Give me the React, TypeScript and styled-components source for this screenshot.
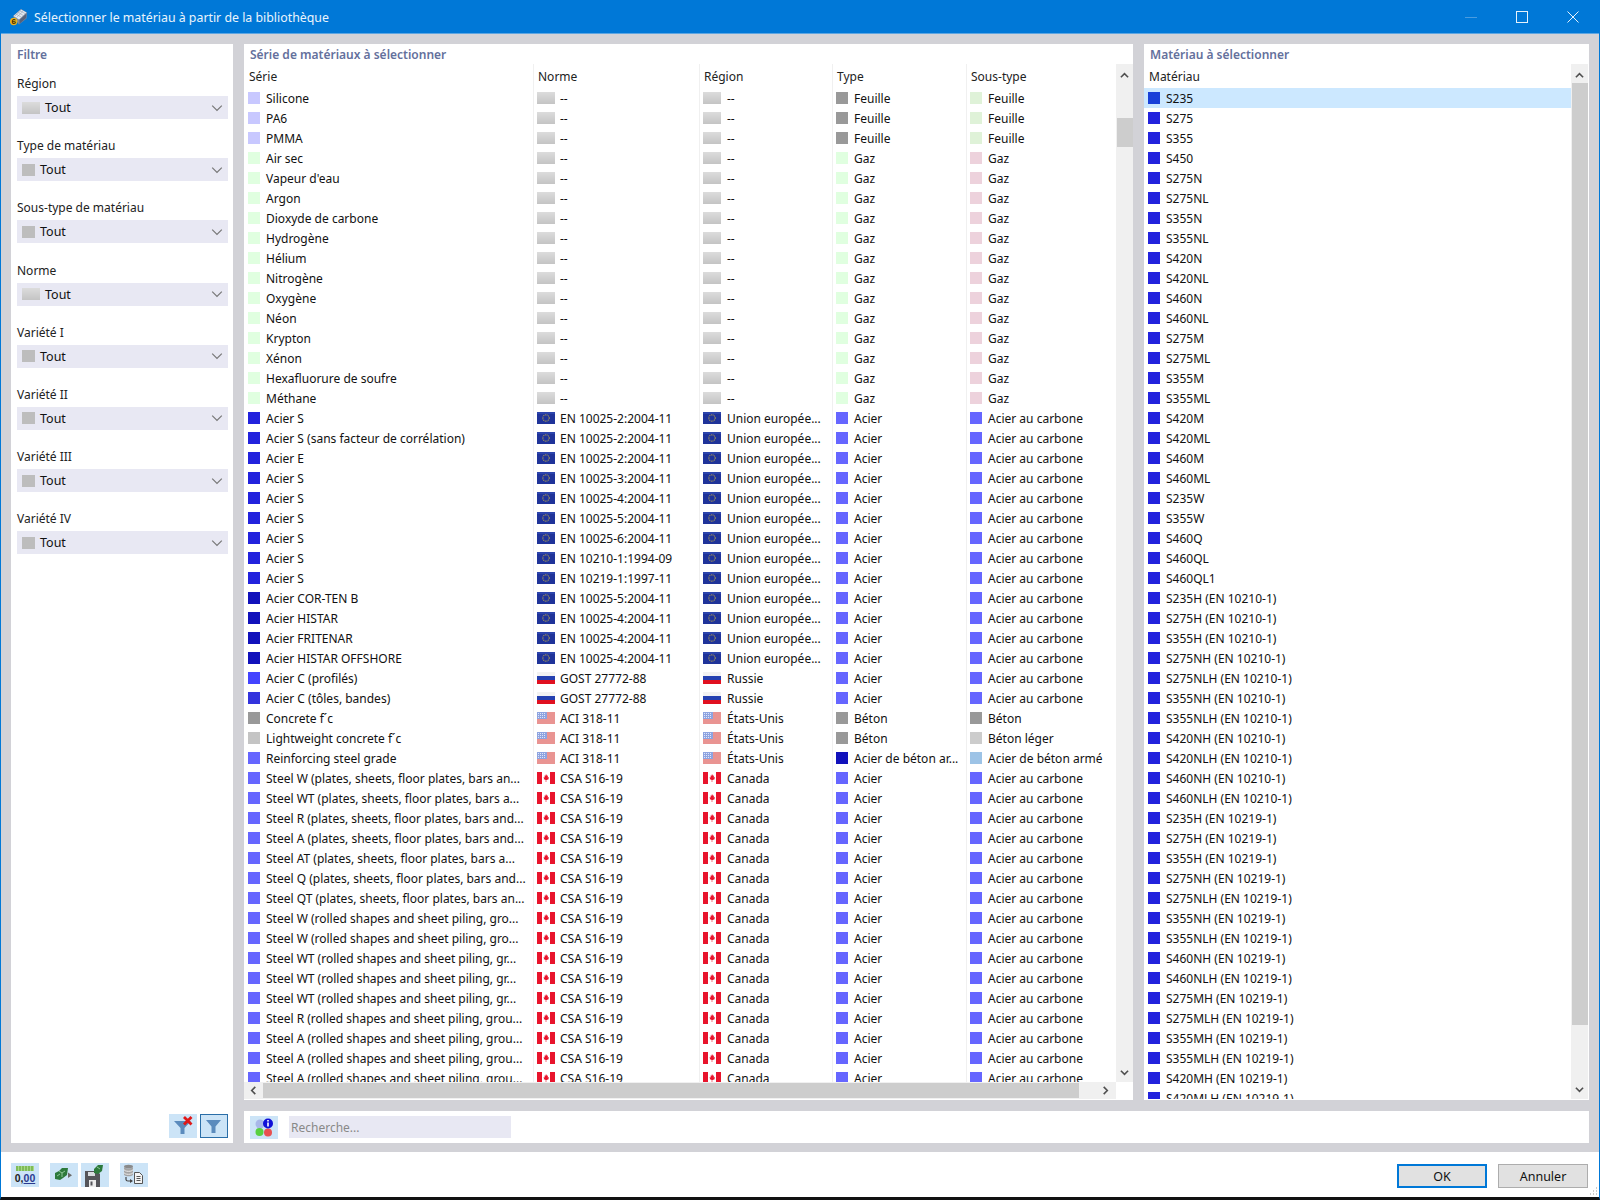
import React from 'react';
import styled, { createGlobalStyle } from 'styled-components';

const GlobalStyle = createGlobalStyle`
   html, body {
      margin: 0;
      padding: 0;
      background: #000;
   }
   body {
      font-family: "Noto Sans", "Liberation Sans", sans-serif;
      font-size: 12px;
      color: #111;
   }
`;

const Window = styled.div`
   position: relative;
   display: flex;
   flex-direction: column;
   width: 1600px;
   height: 1200px;
   box-sizing: border-box;
   border-left: 1px solid #0078d7;
   border-right: 1px solid #0078d7;
   border-bottom: 3px solid #111;
   background: #d2d2d7;
   overflow: hidden;
`;

const TitleBar = styled.div`
   display: flex;
   flex: 0 0 34px;
   align-items: center;
   box-sizing: border-box;
   margin: 0 -1px;
   padding: 0 21px 0 10px;
   background: #0078d7;
   border-bottom: 1px solid #5ea6e2;
`;

const TitleText = styled.span`
   flex: 1;
   margin-left: 6px;
   padding-top: 2px;
   font-size: 12.35px;
   color: #eaf4fc;
`;

const WindowControls = styled.div`
   display: flex;
   align-items: center;
   gap: 39px;
`;

const Body = styled.div`
   display: grid;
   flex: 1;
   min-height: 0;
   grid-template-columns: 222px 889px 445px;
   grid-template-rows: 1056px 32px;
   gap: 11px;
   padding: 10px 10px 9px;
`;

const Panel = styled.section`
   display: flex;
   flex-direction: column;
   min-width: 0;
   min-height: 0;
   background: #fff;
`;

const FilterPanel = styled(Panel)`
   grid-row: 1 / span 2;
   padding: 0 5px 5px 6px;
`;

const SectionTitle = styled.div<{ $inset?: number }>`
   flex: 0 0 auto;
   height: 20px;
   padding-left: ${props => props.$inset ?? 6}px;
   line-height: 22px;
   font-weight: 600;
   color: #64709c;
`;

const FilterFields = styled.div`
   flex: 1;
   padding-top: 10px;
`;

const FilterField = styled.div`
   margin-bottom: 17.2px;
`;

const FieldLabel = styled.div`
   height: 20px;
   margin-bottom: 2px;
   line-height: 20px;
   color: #222;
`;

const Select = styled.div`
   display: flex;
   align-items: center;
   height: 23px;
   padding: 0 5px;
   background: #e8e8f3;
`;

const SelectValue = styled.span`
   flex: 1;
   margin-left: 5px;
   font-size: 12.5px;
`;

const SelectSwatch = styled.span<{ $wide?: boolean }>`
   flex: 0 0 ${props => (props.$wide ? 18 : 13)}px;
   height: 12px;
   background: ${props => (props.$wide ? 'linear-gradient(#dcdcdc, #c4c4c4)' : '#bdbdbd')};
`;

const ToolRow = styled.div`
   display: flex;
   justify-content: flex-end;
   gap: 3px;
`;

const ToolButton = styled.button<{ $active?: boolean }>`
   display: flex;
   align-items: center;
   justify-content: center;
   width: 28px;
   height: 24px;
   padding: 0;
   box-sizing: border-box;
   border: ${props => (props.$active ? '1px solid #2a6ea8' : 'none')};
   background: #cce4f7;
`;

const TableArea = styled.div`
   display: grid;
   flex: 1;
   min-height: 0;
   grid-template-columns: 872px 17px;
   grid-template-rows: 1fr 17px;
   padding-bottom: 1px;
`;

const GradeArea = styled(TableArea)`
   grid-template-columns: 427px 17px;
   grid-template-rows: 1fr;
`;

const TableMain = styled.div`
   display: flex;
   flex-direction: column;
   min-height: 0;
   overflow: hidden;
`;

const seriesColumns = '289px 166px 133px 134px 150px';
const gradeColumns = '426px';

const HeaderRow = styled.div<{ $columns: string }>`
   display: grid;
   flex: 0 0 auto;
   height: 24px;
   grid-template-columns: ${props => props.$columns};
   grid-template-rows: 24px;
`;

const HeaderCell = styled.div`
   box-sizing: border-box;
   padding-left: 4px;
   line-height: 26px;
   border-left: 1px solid #f0f0f0;
   color: #222;
   &:first-child {
      padding-left: 5px;
      border-left: none;
   }
`;

const Row = styled.div<{ $columns: string; $selected?: boolean }>`
   display: grid;
   flex: 0 0 20px;
   grid-template-columns: ${props => props.$columns};
   background: ${props => (props.$selected ? '#cce8ff' : 'transparent')};
`;

const Cell = styled.div`
   display: flex;
   align-items: flex-start;
   box-sizing: border-box;
   height: 20px;
   padding-left: 3px;
   border-left: 1px solid #f0f0f0;
   white-space: nowrap;
   overflow: hidden;
   &:first-child {
      padding-left: 4px;
      border-left: none;
   }
`;

const CellText = styled.span<{ $gap?: number }>`
   margin-left: ${props => props.$gap ?? 6}px;
   line-height: 22px;
`;

const Swatch = styled.span<{ $color: string }>`
   flex: 0 0 12px;
   width: 12px;
   height: 12px;
   margin-top: 4px;
   background: ${props => props.$color};
`;

const BlankFlag = styled.span`
   flex: 0 0 18px;
   width: 18px;
   height: 12px;
   margin-top: 4px;
   background: linear-gradient(#dcdcdc, #c4c4c4);
`;

const FlagImage = styled.svg`
   flex: 0 0 18px;
   width: 18px;
   height: 12px;
   margin-top: 4px;
`;

const VScroll = styled.div`
   display: flex;
   flex-direction: column;
   align-items: stretch;
   min-height: 0;
   background: #f0f0f0;
`;

const ScrollArrow = styled.div`
   display: flex;
   align-items: center;
   justify-content: center;
   flex: 0 0 19px;
   box-sizing: border-box;
   &:first-child {
      padding-top: 3px;
   }
`;

const VTrack = styled.div<{ $before: number }>`
   flex: 1;
   padding: ${props => props.$before}px 0 0 1px;
`;

const VThumb = styled.div<{ $height: number }>`
   height: ${props => props.$height}px;
   background: #cdcdcd;
`;

const HScroll = styled.div`
   display: flex;
   background: #f0f0f0;
`;

const HThumb = styled.div`
   flex: 0 0 816px;
   margin: 1px 0;
   background: #cdcdcd;
`;

const HArrow = styled.div`
   display: flex;
   flex: 0 0 19px;
   align-items: center;
   justify-content: center;
`;

const HEnd = styled(HArrow)`
   flex: 1;
   justify-content: flex-end;
   padding-right: 6px;
`;

const SearchPanel = styled(Panel)`
   grid-column: 2 / span 2;
   flex-direction: row;
   align-items: flex-start;
   gap: 11px;
   padding: 5px 0 0 6px;
`;

const SearchButton = styled(ToolButton)`
   height: 23px;
`;

const SearchInput = styled.div`
   width: 222px;
   height: 22px;
   box-sizing: border-box;
   padding-left: 2px;
   line-height: 23px;
   background: #e8e8f3;
   color: #888;
`;

const Footer = styled.div`
   display: flex;
   flex: 0 0 45px;
   align-items: flex-start;
   box-sizing: border-box;
   padding: 11px 11px 0 10px;
   background: #fff;
`;

const FooterTools = styled.div`
   display: flex;
   flex: 1;
`;

const FooterButton = styled(ToolButton)<{ $gap?: number }>`
   margin-left: ${props => props.$gap ?? 0}px;
`;

const DialogButton = styled.button<{ $primary?: boolean }>`
   width: 90px;
   height: 24px;
   margin: 1px 0 0 ${props => (props.$primary ? 0 : 11)}px;
   padding: 0;
   box-sizing: border-box;
   border: ${props => (props.$primary ? '2px solid #0078d7' : '1px solid #adadad')};
   background: #e1e1e1;
   font: inherit;
   font-size: 12.5px;
   color: #111;
`;

const ResizeGrip = styled.svg`
   position: absolute;
   right: 1px;
   bottom: 1px;
   width: 10px;
   height: 10px;
`;

type FlagKind = 'blank' | 'eu' | 'ru' | 'us' | 'ca';

function Flag({ kind }: { kind: FlagKind }) {
   if (kind === 'blank') return <BlankFlag />;
   if (kind === 'eu') {
      return (
         <FlagImage viewBox="0 0 18 12">
            <rect width="18" height="12" fill="#1f3399" />
            <rect width="18" height="2" fill="#2c44ac" />
            <circle cx="9" cy="6" r="3.2" fill="none" stroke="#a89a55" strokeWidth="1.1" strokeDasharray="1 .7" />
         </FlagImage>
      );
   }
   if (kind === 'ru') {
      return (
         <FlagImage viewBox="0 0 18 12">
            <rect width="18" height="4" fill="#f2f2f2" />
            <rect y="4" width="18" height="4" fill="#2440b0" />
            <rect y="8" width="18" height="4" fill="#e01020" />
         </FlagImage>
      );
   }
   if (kind === 'us') {
      return (
         <FlagImage viewBox="0 0 18 12">
            <rect width="18" height="12" fill="#f6dcd8" />
            <path d="M0 1h18M0 3h18M0 5h18M0 7h18M0 9h18M0 11h18" stroke="#dc4c4c" strokeWidth="1" />
            <rect width="10" height="7" fill="#8ea4e0" />
            <path d="M1 1.5h8M1 3.5h8M1 5.5h8" stroke="#dfe6fa" strokeWidth="1" strokeDasharray="1 1" />
         </FlagImage>
      );
   }
   return (
      <FlagImage viewBox="0 0 18 12">
         <rect width="18" height="12" fill="#fff" />
         <rect width="5" height="12" fill="#e8142c" />
         <rect x="13" width="5" height="12" fill="#e8142c" />
         <path d="M9 2l1 1.8 1-.4-.3 2 1.3-.4-.6 1.5.6.5-2.2 1H9.300V10h-.6V8l-2.200-1 .6-.5-.6-1.500 1.300.4-.3-2 1 .4z" fill="#e8142c" />
      </FlagImage>
   );
}

function Chevron({ dir = 'down', size = 12, color = '#777', weight = 1 }: { dir?: 'up' | 'down' | 'left' | 'right'; size?: number; color?: string; weight?: number }) {
   const points = {
      down: '1,3 5,7 9,3',
      up: '1,7 5,3 9,7',
      left: '7,1 3,5 7,9',
      right: '3,1 7,5 3,9',
   }[dir];
   return (
      <svg width={size} height={size} viewBox="0 0 10 10">
         <polyline points={points} fill="none" stroke={color} strokeWidth={weight} />
      </svg>
   );
}

function ScrollChevron({ dir }: { dir: 'up' | 'down' | 'left' | 'right' }) {
   return <Chevron dir={dir} size={9} color="#505050" weight={1.8} />;
}

function TitleIcon() {
   return (
      <svg width="18" height="18" viewBox="0 0 18 18">
         <path d="M3 8L11 1l6 3.5-.5 6L9 16.5z" fill="#7d8aa0" />
         <path d="M3.500 8L11 1.500l5.500 3L9 11.500z" fill="#e4e9f0" />
         <path d="M6 6l5.500 3.300M8 4.300l5.500 3.300M10 2.600l5.500 3.300M6.500 9.500L13 3.300M5 8l6-5.500" stroke="#94a2b6" strokeWidth=".6" />
         <path d="M9.500 12L16.500 5.500l-.4 4.500L9.500 16z" fill="#56627a" />
         <circle cx="3.700" cy="13.500" r="3.700" fill="#e8b020" />
         <text x="3.700" y="16.400" textAnchor="middle" fontSize="8" fontWeight="700" fill="#3c2a00" fontFamily="Liberation Sans">6</text>
      </svg>
   );
}

function FunnelIcon({ clear }: { clear?: boolean }) {
   return (
      <svg width="24" height="22" viewBox="0 0 24 22">
         <path d={clear ? 'M3 6h17l-6.500 7v6h-4v-6z' : 'M4 5h15l-5.500 6.500V18h-4v-6.500z'} fill="#5b8bbd" />
         {clear && <path d="M13 2l7.500 7.500M20.500 2L13 9.500" stroke="#e01818" strokeWidth="2.8" />}
      </svg>
   );
}

function InfoIcon() {
   return (
      <svg width="20" height="20" viewBox="0 0 20 20">
         <circle cx="6" cy="6" r="4.5" fill="#a8b8e8" />
         <circle cx="5.5" cy="14" r="4" fill="#58d040" />
         <circle cx="14" cy="14.5" r="4" fill="#e85050" />
         <circle cx="14" cy="5.5" r="5" fill="#1010d8" />
         <rect x="13.2" y="4.5" width="1.6" height="4" fill="#fff" />
         <rect x="13.2" y="2" width="1.6" height="1.5" fill="#fff" />
      </svg>
   );
}

const DecimalsBar = styled.span`
   display: flex;
   flex-direction: column;
   align-items: center;
   width: 20px;
`;

const DecimalsRule = styled.span`
   width: 18px;
   height: 5px;
   background: repeating-linear-gradient(90deg, #7fbc58 0 2px, #a8d888 2px 3px);
`;

const DecimalsText = styled.span`
   margin-top: 1px;
   font-size: 10.5px;
   font-weight: 700;
   line-height: 12px;
   color: #222;
   & > u {
      font-weight: 600;
      color: #2a3a90;
   }
`;

function CubesIcon() {
   return (
      <svg width="28" height="24" viewBox="0 0 28 24">
         <path d="M5 10l4-2 3-3h6l-1 7-4 3-3 2-5-1z" fill="#2d7a3c" />
         <path d="M9 8l3 2 3-2M7 13l3-2M12 10v4" stroke="#9ad0a4" strokeWidth=".9" fill="none" />
         <path d="M18 9.5l4 2.800-4 2.800z" fill="#6a6a6a" />
      </svg>
   );
}

function SaveIcon() {
   return (
      <svg width="28" height="24" viewBox="0 0 28 24">
         <path d="M4 8h12l3 3v13H4z" fill="#55555a" />
         <rect x="7" y="9" width="7" height="4" fill="#d8dce0" />
         <rect x="8" y="17" width="7" height="7" fill="#ececec" />
         <rect x="9.5" y="18.5" width="2" height="4" fill="#55555a" />
         <path d="M13 6l4-4h5l-1 6-4 3-4-1z" fill="#2d7a3c" />
         <path d="M16 4l3 2" stroke="#9ad0a4" strokeWidth=".9" />
      </svg>
   );
}

function LibraryIcon() {
   return (
      <svg width="28" height="24" viewBox="0 0 28 24">
         <ellipse cx="8.5" cy="3.5" rx="4.5" ry="1.8" fill="#8a8a8a" />
         <path d="M4 3.5v8c0 1 2 1.800 4.500 1.800S13 12.500 13 11.500v-8c0 1-2 1.800-4.500 1.800S4 4.500 4 3.500z" fill="#a4a4a4" />
         <path d="M4 6.5c0 1 2 1.800 4.500 1.800S13 7.500 13 6.500M4 9.500c0 1 2 1.800 4.500 1.800S13 10.500 13 9.500" stroke="#eee" fill="none" />
         <path d="M6 14v2.500c0 1 1 1.500 2 1.500h2" stroke="#444" strokeWidth="1.2" fill="none" />
         <path d="M10 16l3 2-3 2z" fill="#444" />
         <path d="M14.5 9.500h5l3 3v8h-8z" fill="#f4f4f4" stroke="#555" />
         <path d="M16.5 13.500h4M16.500 15.500h4M16.500 17.500h4" stroke="#555" />
      </svg>
   );
}

type Swatched = { label: string; color: string };
type SeriesRow = { name: string; swatch: string; norm: string; flag: FlagKind; region: string; type: Swatched; subtype: Swatched };

const SIDE_FILTERS: { label: string; wide?: boolean }[] = [
   { label: 'Région', wide: true },
   { label: 'Type de matériau' },
   { label: 'Sous-type de matériau' },
   { label: 'Norme', wide: true },
   { label: 'Variété I' },
   { label: 'Variété II' },
   { label: 'Variété III' },
   { label: 'Variété IV' },
];

const ACIER = { label: 'Acier', color: '#6666ff' };
const CARBONE = { label: 'Acier au carbone', color: '#6666ff' };
const GAZ = { label: 'Gaz', color: '#e0ffe0' };
const GAZ_SUB = { label: 'Gaz', color: '#edd2dc' };
const FEUILLE = { label: 'Feuille', color: '#999999' };
const FEUILLE_SUB = { label: 'Feuille', color: '#dff2d8' };
const BETON = { label: 'Béton', color: '#999999' };

function steel(name: string, swatch: string, norm: string): SeriesRow {
   return { name, swatch, norm, flag: 'eu', region: 'Union europée...', type: ACIER, subtype: CARBONE };
}

function canadian(name: string): SeriesRow {
   return { name, swatch: '#6666ff', norm: 'CSA S16-19', flag: 'ca', region: 'Canada', type: ACIER, subtype: CARBONE };
}

function foil(name: string): SeriesRow {
   return { name, swatch: '#c8c8ff', norm: '--', flag: 'blank', region: '--', type: FEUILLE, subtype: FEUILLE_SUB };
}

function gas(name: string): SeriesRow {
   return { name, swatch: '#e0ffe0', norm: '--', flag: 'blank', region: '--', type: GAZ, subtype: GAZ_SUB };
}

const SERIES: SeriesRow[] = [
   foil('Silicone'),
   foil('PA6'),
   foil('PMMA'),
   ...['Air sec', "Vapeur d'eau", 'Argon', 'Dioxyde de carbone', 'Hydrogène', 'Hélium', 'Nitrogène', 'Oxygène', 'Néon', 'Krypton', 'Xénon', 'Hexafluorure de soufre', 'Méthane'].map(gas),
   steel('Acier S', '#2222dd', 'EN 10025-2:2004-11'),
   steel('Acier S (sans facteur de corrélation)', '#2222dd', 'EN 10025-2:2004-11'),
   steel('Acier E', '#2222dd', 'EN 10025-2:2004-11'),
   steel('Acier S', '#2222dd', 'EN 10025-3:2004-11'),
   steel('Acier S', '#2222dd', 'EN 10025-4:2004-11'),
   steel('Acier S', '#2222dd', 'EN 10025-5:2004-11'),
   steel('Acier S', '#2222dd', 'EN 10025-6:2004-11'),
   steel('Acier S', '#2222dd', 'EN 10210-1:1994-09'),
   steel('Acier S', '#2222dd', 'EN 10219-1:1997-11'),
   steel('Acier COR-TEN B', '#1111bb', 'EN 10025-5:2004-11'),
   steel('Acier HISTAR', '#1111bb', 'EN 10025-4:2004-11'),
   steel('Acier FRITENAR', '#1111bb', 'EN 10025-4:2004-11'),
   steel('Acier HISTAR OFFSHORE', '#1111bb', 'EN 10025-4:2004-11'),
   { name: 'Acier C (profilés)', swatch: '#4444ff', norm: 'GOST 27772-88', flag: 'ru', region: 'Russie', type: ACIER, subtype: CARBONE },
   { name: 'Acier C (tôles, bandes)', swatch: '#3333dd', norm: 'GOST 27772-88', flag: 'ru', region: 'Russie', type: ACIER, subtype: CARBONE },
   { name: 'Concrete f´c', swatch: '#999999', norm: 'ACI 318-11', flag: 'us', region: 'États-Unis', type: BETON, subtype: BETON },
   { name: 'Lightweight concrete f´c', swatch: '#c4c4c4', norm: 'ACI 318-11', flag: 'us', region: 'États-Unis', type: BETON, subtype: { label: 'Béton léger', color: '#cccccc' } },
   { name: 'Reinforcing steel grade', swatch: '#6666ff', norm: 'ACI 318-11', flag: 'us', region: 'États-Unis', type: { label: 'Acier de béton ar...', color: '#1111bb' }, subtype: { label: 'Acier de béton armé', color: '#9dc3e6' } },
   ...[
      'Steel W (plates, sheets, floor plates, bars an...',
      'Steel WT (plates, sheets, floor plates, bars a...',
      'Steel R (plates, sheets, floor plates, bars and...',
      'Steel A (plates, sheets, floor plates, bars and...',
      'Steel AT (plates, sheets, floor plates, bars a...',
      'Steel Q (plates, sheets, floor plates, bars and...',
      'Steel QT (plates, sheets, floor plates, bars an...',
      'Steel W (rolled shapes and sheet piling, gro...',
      'Steel W (rolled shapes and sheet piling, gro...',
      'Steel WT (rolled shapes and sheet piling, gr...',
      'Steel WT (rolled shapes and sheet piling, gr...',
      'Steel WT (rolled shapes and sheet piling, gr...',
      'Steel R (rolled shapes and sheet piling, grou...',
      'Steel A (rolled shapes and sheet piling, grou...',
      'Steel A (rolled shapes and sheet piling, grou...',
      'Steel A (rolled shapes and sheet piling, grou...',
   ].map(canadian),
];

const GRADES = [
   'S235', 'S275', 'S355', 'S450', 'S275N', 'S275NL', 'S355N', 'S355NL', 'S420N', 'S420NL', 'S460N', 'S460NL',
   'S275M', 'S275ML', 'S355M', 'S355ML', 'S420M', 'S420ML', 'S460M', 'S460ML', 'S235W', 'S355W', 'S460Q', 'S460QL', 'S460QL1',
   ...['S235H', 'S275H', 'S355H', 'S275NH', 'S275NLH', 'S355NH', 'S355NLH', 'S420NH', 'S420NLH', 'S460NH', 'S460NLH'].map(g => `${g} (EN 10210-1)`),
   ...['S235H', 'S275H', 'S355H', 'S275NH', 'S275NLH', 'S355NH', 'S355NLH', 'S460NH', 'S460NLH', 'S275MH', 'S275MLH', 'S355MH', 'S355MLH', 'S420MH', 'S420MLH'].map(g => `${g} (EN 10219-1)`),
];

export default function App() {
   return (
      <Window>
         <GlobalStyle />
         <TitleBar>
            <TitleIcon />
            <TitleText>Sélectionner le matériau à partir de la bibliothèque</TitleText>
            <WindowControls>
               <svg width="12" height="12" viewBox="0 0 12 12">
                  <path d="M0 6.5h12" stroke="#4a9ce0" />
               </svg>
               <svg width="12" height="12" viewBox="0 0 12 12">
                  <rect x=".5" y=".5" width="11" height="11" fill="none" stroke="#e6f2fb" />
               </svg>
               <svg width="12" height="12" viewBox="0 0 12 12">
                  <path d="M.5.5l11 11M11.5.5l-11 11" stroke="#e6f2fb" />
               </svg>
            </WindowControls>
         </TitleBar>
         <Body>
            <FilterPanel>
               <SectionTitle $inset={0}>Filtre</SectionTitle>
               <FilterFields>
                  {SIDE_FILTERS.map(filter => (
                     <FilterField key={filter.label}>
                        <FieldLabel>{filter.label}</FieldLabel>
                        <Select>
                           <SelectSwatch $wide={filter.wide} />
                           <SelectValue>Tout</SelectValue>
                           <Chevron />
                        </Select>
                     </FilterField>
                  ))}
               </FilterFields>
               <ToolRow>
                  <ToolButton><FunnelIcon clear /></ToolButton>
                  <ToolButton $active><FunnelIcon /></ToolButton>
               </ToolRow>
            </FilterPanel>

            <Panel>
               <SectionTitle>Série de matériaux à sélectionner</SectionTitle>
               <TableArea>
                  <TableMain>
                     <HeaderRow $columns={seriesColumns}>
                        {['Série', 'Norme', 'Région', 'Type', 'Sous-type'].map(title => (
                           <HeaderCell key={title}>{title}</HeaderCell>
                        ))}
                     </HeaderRow>
                     {SERIES.map((row, index) => (
                        <Row key={index} $columns={seriesColumns}>
                           <Cell>
                              <Swatch $color={row.swatch} />
                              <CellText>{row.name}</CellText>
                           </Cell>
                           <Cell>
                              <Flag kind={row.flag} />
                              <CellText $gap={5}>{row.norm}</CellText>
                           </Cell>
                           <Cell>
                              <Flag kind={row.flag} />
                              <CellText>{row.region}</CellText>
                           </Cell>
                           <Cell>
                              <Swatch $color={row.type.color} />
                              <CellText>{row.type.label}</CellText>
                           </Cell>
                           <Cell>
                              <Swatch $color={row.subtype.color} />
                              <CellText>{row.subtype.label}</CellText>
                           </Cell>
                        </Row>
                     ))}
                  </TableMain>
                  <VScroll>
                     <ScrollArrow><ScrollChevron dir="up" /></ScrollArrow>
                     <VTrack $before={35}><VThumb $height={29} /></VTrack>
                     <ScrollArrow><ScrollChevron dir="down" /></ScrollArrow>
                  </VScroll>
                  <HScroll>
                     <HArrow><ScrollChevron dir="left" /></HArrow>
                     <HThumb />
                     <HEnd><ScrollChevron dir="right" /></HEnd>
                  </HScroll>
               </TableArea>
            </Panel>

            <Panel>
               <SectionTitle>Matériau à sélectionner</SectionTitle>
               <GradeArea>
                  <TableMain>
                     <HeaderRow $columns={gradeColumns}>
                        <HeaderCell>Matériau</HeaderCell>
                     </HeaderRow>
                     {GRADES.map((grade, index) => (
                        <Row key={grade} $columns={gradeColumns} $selected={index === 0}>
                           <Cell>
                              <Swatch $color={index === 0 ? '#1a40d8' : '#2222dd'} />
                              <CellText>{grade}</CellText>
                           </Cell>
                        </Row>
                     ))}
                  </TableMain>
                  <VScroll>
                     <ScrollArrow><ScrollChevron dir="up" /></ScrollArrow>
                     <VTrack $before={0}><VThumb $height={942} /></VTrack>
                     <ScrollArrow><ScrollChevron dir="down" /></ScrollArrow>
                  </VScroll>
               </GradeArea>
            </Panel>

            <SearchPanel>
               <SearchButton><InfoIcon /></SearchButton>
               <SearchInput>Recherche...</SearchInput>
            </SearchPanel>
         </Body>
         <Footer>
            <FooterTools>
               <FooterButton>
                  <DecimalsBar>
                     <DecimalsRule />
                     <DecimalsText>0,<u>00</u></DecimalsText>
                  </DecimalsBar>
               </FooterButton>
               <FooterButton $gap={11}><CubesIcon /></FooterButton>
               <FooterButton $gap={3}><SaveIcon /></FooterButton>
               <FooterButton $gap={11}><LibraryIcon /></FooterButton>
            </FooterTools>
            <DialogButton $primary>OK</DialogButton>
            <DialogButton>Annuler</DialogButton>
         </Footer>
         <ResizeGrip viewBox="0 0 10 10">
            <path d="M8 2h1M5 5h1M8 5h1M2 8h1M5 8h1M8 8h1" stroke="#999" />
         </ResizeGrip>
      </Window>
   );
}
